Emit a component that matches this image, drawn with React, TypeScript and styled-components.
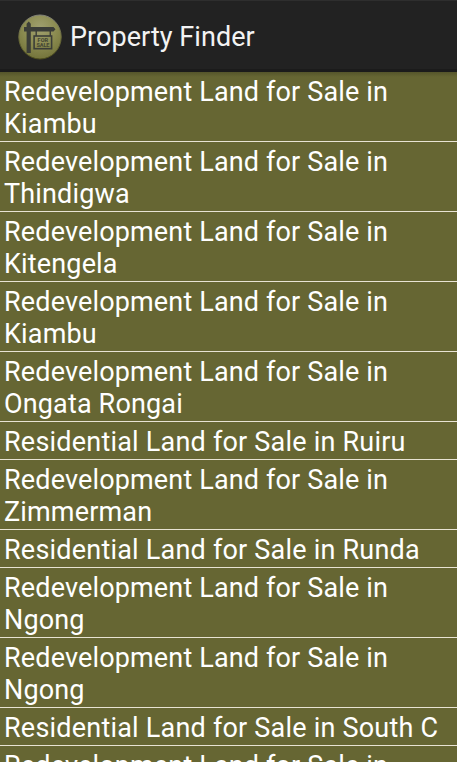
import React from "react";
import styled, { createGlobalStyle } from "styled-components";

const GlobalStyle = createGlobalStyle`
  html, body { margin: 0; height: 100%; overflow: hidden; background: #666633; }
`;

const Screen = styled.div`
  height: 762px;
  overflow: hidden;
  background: #666633;
  font-family: Roboto, sans-serif;
  color: #fff;
`;

const ActionBar = styled.header`
  box-sizing: border-box;
  height: 72px;
  display: flex;
  align-items: center;
  padding-left: 18px;
  gap: 8px;
  background: #222;
  border-top: 1px solid #2e2e2e;
  border-bottom: 3px solid #1b1b1b;
`;

const Title = styled.h1`
  margin: 4px 0 0;
  font-size: 27px;
  line-height: 32px;
  font-weight: 400;
  letter-spacing: 0.05px;
  color: #f3f3f3;
`;

const List = styled.ul`
  margin: 0;
  padding: 0;
  list-style: none;
  background: linear-gradient(#55552b, #666633 5px);
`;

const Row = styled.li<{ $wide: boolean }>`
  padding: 4px 4px 1px;
  font-size: 27px;
  line-height: 32px;
  letter-spacing: ${(p) => (p.$wide ? "0.21px" : "0.15px")};
  border-bottom: 1px solid #e8e3d3;
`;

const Line = styled.div`
  white-space: nowrap;
`;

const Logo = styled.svg`
  display: block;
  margin-top: 3px;
`;

const redevelopment = "Redevelopment Land for Sale in";

const rows = [
  [redevelopment, "Kiambu"],
  [redevelopment, "Thindigwa"],
  [redevelopment, "Kitengela"],
  [redevelopment, "Kiambu"],
  [redevelopment, "Ongata Rongai"],
  ["Residential Land for Sale in Ruiru"],
  [redevelopment, "Zimmerman"],
  ["Residential Land for Sale in Runda"],
  [redevelopment, "Ngong"],
  [redevelopment, "Ngong"],
  ["Residential Land for Sale in South C"],
  [redevelopment],
];

function SaleSignLogo() {
  return (
    <Logo width="44" height="46" viewBox="0 0 44 46">
      <defs>
        <radialGradient id="disc" cx="50%" cy="30%" r="72%">
          <stop offset="0" stopColor="#a0a070" />
          <stop offset="0.55" stopColor="#8b8b50" />
          <stop offset="1" stopColor="#73733a" />
        </radialGradient>
        <linearGradient id="rim" x1="0" y1="0" x2="0" y2="1">
          <stop offset="0" stopColor="#85857a" />
          <stop offset="0.5" stopColor="#6b6b3c" />
          <stop offset="1" stopColor="#4e4e1c" />
        </linearGradient>
      </defs>
      <ellipse cx="22" cy="23" rx="21.2" ry="22" fill="url(#disc)" stroke="url(#rim)" />
      <g fill="#3b3d38">
        <path d="M8.6 9.8 L10.7 7.6 L12.8 9.8 V13 H35.5 L37.5 15.2 L35.5 17.4 H12.8 V39 H8.6 V17.4 H6 V13 H8.6 Z" />
        <rect x="17.5" y="17" width="1.4" height="5" />
        <rect x="31.6" y="17" width="1.4" height="5" />
      </g>
      <rect x="16.1" y="22" width="17.5" height="12.7" fill="none" stroke="#3b3d38" strokeWidth="1.6" />
      <g fill="#484a35" fontFamily="Roboto, sans-serif" fontWeight="900" fontSize="5.6" textAnchor="middle">
        <text x="24.9" y="28">FOR</text>
        <text x="24.9" y="33.1" textLength="13">SALE</text>
      </g>
    </Logo>
  );
}

export default function App() {
  return (
    <Screen>
      <GlobalStyle />
      <ActionBar>
        <SaleSignLogo />
        <Title>Property Finder</Title>
      </ActionBar>
      <List>
        {rows.map((lines, i) => (
          <Row key={i} $wide={lines[0] !== redevelopment}>
            {lines.map((line) => (
              <Line key={line}>{line}</Line>
            ))}
          </Row>
        ))}
      </List>
    </Screen>
  );
}
